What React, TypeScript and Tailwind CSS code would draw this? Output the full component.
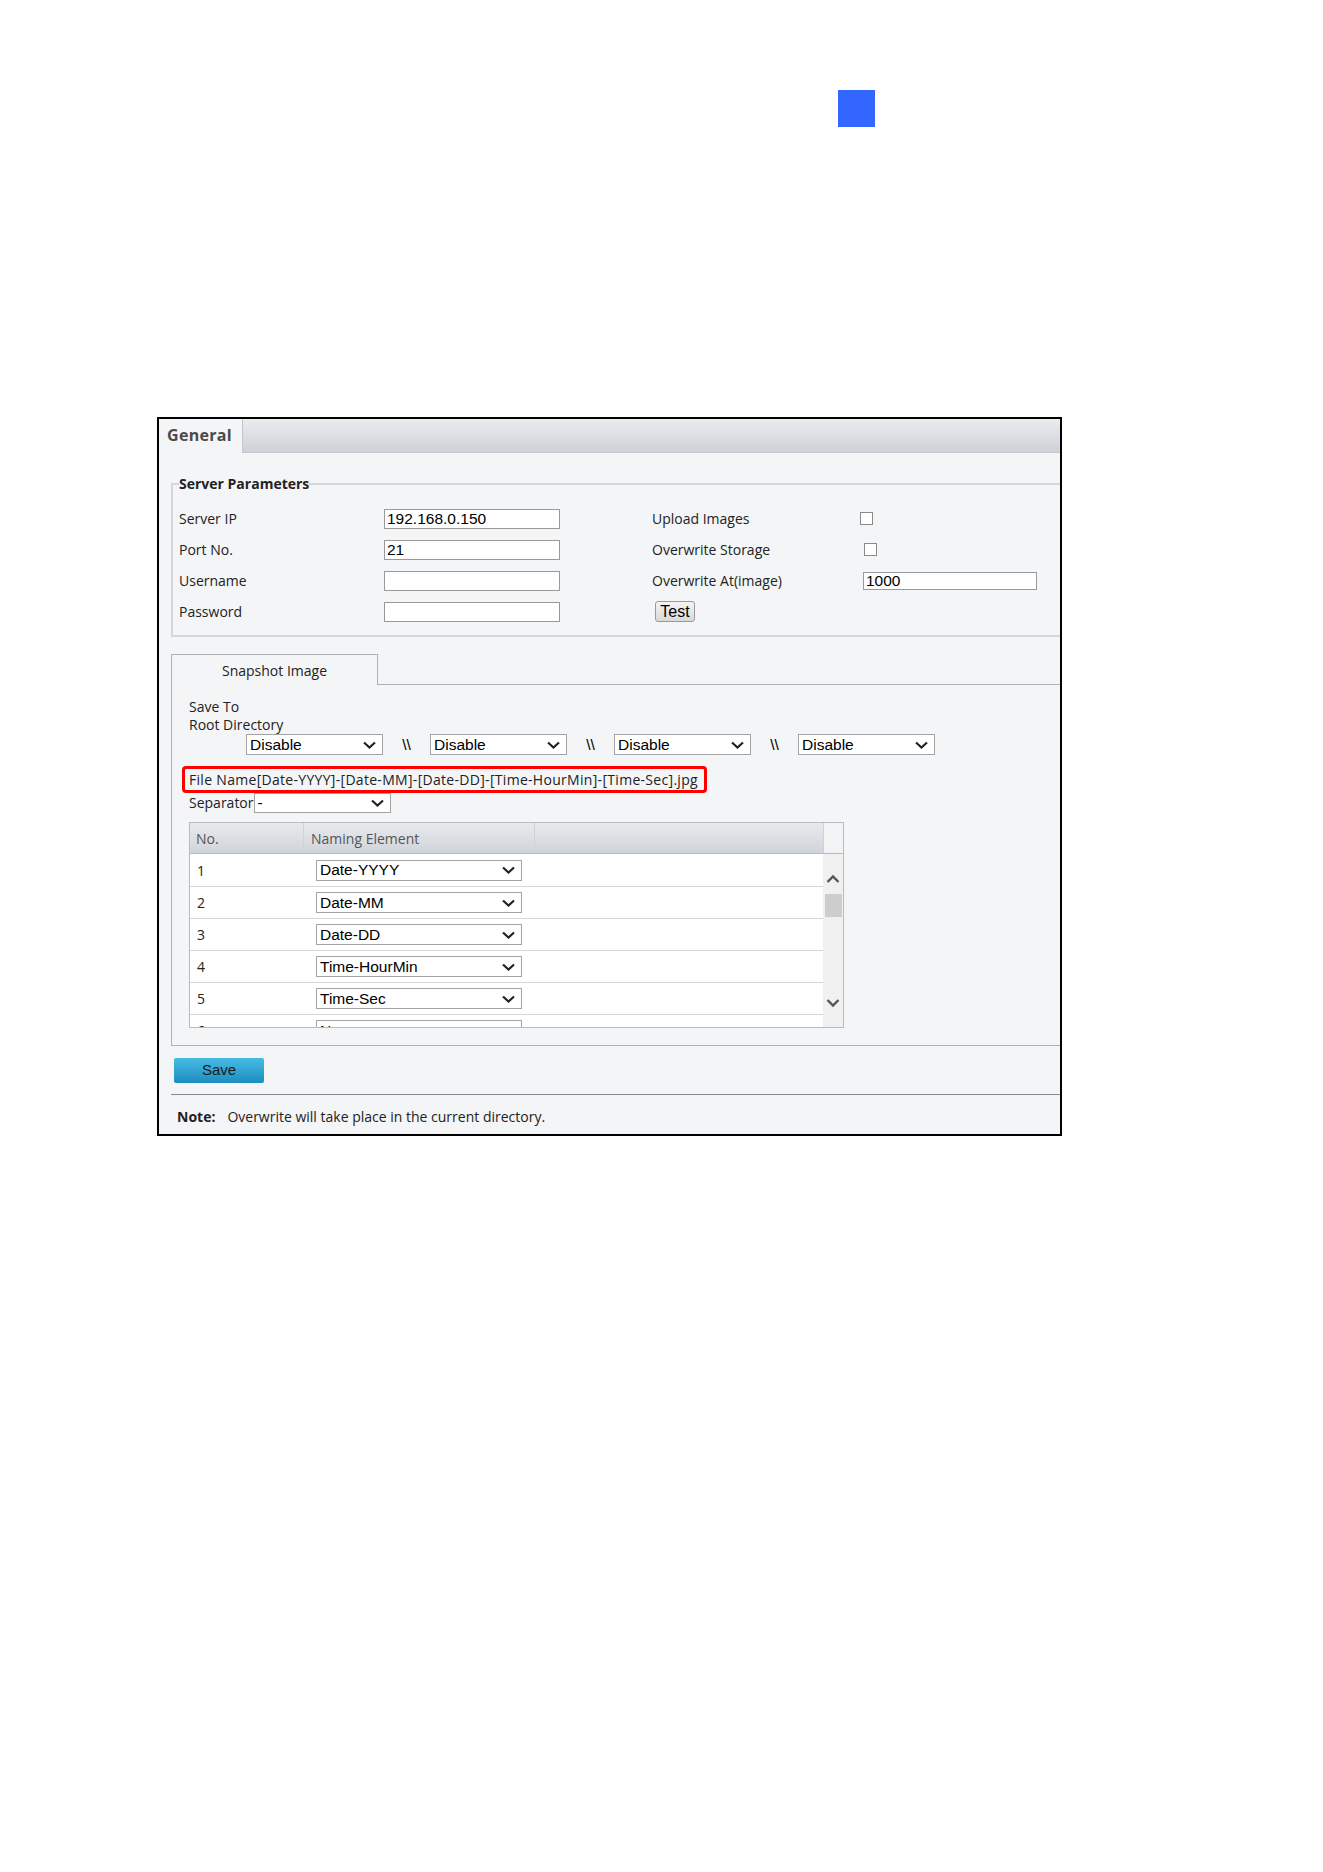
import React from "react";

const LABEL = "font-['Open_Sans','Noto_Sans',sans-serif] text-[14px] text-[#222]";
const FIELD = "font-['Liberation_Sans',Arial,sans-serif] text-[15.5px] text-black";

function Chevron({ up = false, color = "#222" }: { up?: boolean; color?: string }) {
  return (
    <svg width="13" height="8" viewBox="0 0 13 8" className="shrink-0">
      <path
        d={up ? "M1 6.5 L6.5 1.5 L12 6.5" : "M1 1.5 L6.5 6.5 L12 1.5"}
        stroke={color}
        strokeWidth="2.2"
        fill="none"
      />
    </svg>
  );
}

function Select({ value, className = "" }: { value: string; className?: string }) {
  return (
    <div
      className={`flex items-center justify-between overflow-hidden bg-white border border-[#a3a3a3] pl-[3px] pr-[6px] ${className}`}
    >
      <span className={`${FIELD} leading-none`}>{value}</span>
      <Chevron />
    </div>
  );
}

function TextBox({ value = "", className = "" }: { value?: string; className?: string }) {
  return (
    <div
      className={`flex items-center bg-white border border-[#9a9a9a] pl-[2px] ${FIELD} leading-none ${className}`}
    >
      {value}
    </div>
  );
}

function CheckBox({ className = "" }: { className?: string }) {
  return <div className={`h-[13px] w-[13px] bg-white border border-[#8a8a8a] ${className}`} />;
}

function PathSep() {
  return <span className={`${FIELD} w-[47px] text-center leading-none text-[#333]`}>\\</span>;
}

const naming = ["Date-YYYY", "Date-MM", "Date-DD", "Time-HourMin", "Time-Sec", "None"];

export default function App() {
  return (
    <div className="min-h-[1872px] w-[1323px] bg-white pt-[90px]">
      <div className="ml-[838px] h-[37px] w-[37px] bg-[#3366ff]" />

      <div className="ml-[157px] mt-[290px] flex h-[719px] w-[905px] flex-col border-2 border-black bg-[#f4f5f7]">
        {/* tab strip */}
        <div className="flex h-[34px] shrink-0">
          <div className="flex w-[84px] items-center border-r border-[#c3c7cc] bg-[#f4f5f7] pb-[2px] pl-[8px] font-['Open_Sans','Noto_Sans',sans-serif] text-[16px] font-bold tracking-[0.3px] text-[#4a4a4a]">
            General
          </div>
          <div className="flex-1 border-b border-[#c3c7cc] bg-gradient-to-b from-[#eaecef] to-[#cdd2d8]" />
        </div>

        <div className="flex flex-1 flex-col pl-[12px]">
          {/* server parameters */}
          <fieldset className="mt-[22px] border-2 border-r-0 border-[#d3d6da] pl-[6px] pt-[10px] pb-[8px]">
            <legend className={`${LABEL} text-[13.5px] font-bold leading-[18px] text-[#1a1a1a]`}>Server Parameters</legend>

            <div className="flex h-[31px] items-center">
              <span className={`${LABEL} w-[205px]`}>Server IP</span>
              <TextBox value="192.168.0.150" className="h-[20px] w-[176px]" />
              <span className={`${LABEL} ml-[92px] w-[208px]`}>Upload Images</span>
              <CheckBox />
            </div>
            <div className="flex h-[31px] items-center">
              <span className={`${LABEL} w-[205px]`}>Port No.</span>
              <TextBox value="21" className="h-[20px] w-[176px]" />
              <span className={`${LABEL} ml-[92px] w-[208px]`}>Overwrite Storage</span>
              <CheckBox className="ml-[4px]" />
            </div>
            <div className="flex h-[31px] items-center">
              <span className={`${LABEL} w-[205px]`}>Username</span>
              <TextBox className="h-[20px] w-[176px]" />
              <span className={`${LABEL} ml-[92px] w-[208px]`}>Overwrite At(image)</span>
              <TextBox value="1000" className="ml-[3px] h-[18px] w-[174px]" />
            </div>
            <div className="flex h-[31px] items-center">
              <span className={`${LABEL} w-[205px]`}>Password</span>
              <TextBox className="h-[20px] w-[176px]" />
              <button className="ml-[95px] flex h-[21px] w-[40px] items-center justify-center rounded-[3px] border border-[#9a9a9a] bg-gradient-to-b from-[#f4f4f4] to-[#d9d9d9] font-['Liberation_Sans',Arial,sans-serif] text-[16px] leading-none text-black">
                Test
              </button>
            </div>
          </fieldset>

          {/* snapshot settings */}
          <div className="mt-[17px] flex flex-col border-b border-l border-[#aeb2b7] pb-[17px]">
            <div className="flex h-[31px]">
              <div className={`${LABEL} flex w-[206px] items-center justify-center border-r border-t border-[#aeb2b7]`}>
                Snapshot Image
              </div>
              <div className="flex-1 border-b border-[#aeb2b7]" />
            </div>

            <div className="pl-[17px] pt-[13px]">
              <div className={`${LABEL} leading-[18px]`}>Save To</div>
              <div className={`${LABEL} leading-[18px]`}>Root Directory</div>

              <div className="ml-[57px] flex h-[21px] items-center">
                <Select value="Disable" className="h-[21px] w-[137px]" />
                <PathSep />
                <Select value="Disable" className="h-[21px] w-[137px]" />
                <PathSep />
                <Select value="Disable" className="h-[21px] w-[137px]" />
                <PathSep />
                <Select value="Disable" className="h-[21px] w-[137px]" />
              </div>

              <div className="ml-[-7px] mt-[11px] flex h-[27px] w-[525px] items-center rounded-[4px] border-[3px] border-[#ff0000] pl-[4px]">
                <span className={`${LABEL} text-[14.6px] leading-none tracking-[0.3px] text-[#1a1a1a]`}>
                  File Name[Date-YYYY]-[Date-MM]-[Date-DD]-[Time-HourMin]-[Time-Sec].jpg
                </span>
              </div>

              <div className="flex h-[20px] items-center">
                <span className={`${LABEL} leading-none`}>Separator</span>
                <Select value="-" className="h-[20px] w-[137px]" />
              </div>

              {/* naming elements table */}
              <div className="mt-[9px] w-[655px] border border-[#b7babe]">
                <div className="flex h-[31px] border-b border-[#b7babe]">
                  <div className="flex flex-1 bg-gradient-to-b from-[#e8eaed] to-[#d0d4da]">
                    <div className={`${LABEL} flex w-[114px] items-center border-r border-[#cfd2d6] pl-[6px] text-[#555]`}>No.</div>
                    <div className={`${LABEL} flex w-[231px] items-center border-r border-[#cfd2d6] pl-[7px] text-[#555]`}>Naming Element</div>
                    <div className="flex-1" />
                  </div>
                  <div className="w-[20px] border-l border-[#cfd2d6] bg-[#f2f3f5]" />
                </div>

                <div className="flex h-[173px]">
                  <div className="flex-1 overflow-hidden bg-white">
                    {naming.map((n, i) => (
                      <div
                        key={n}
                        className={`flex items-center border-b border-[#d6d6d6] ${i === 0 ? "h-[33px]" : "h-[32px]"}`}
                      >
                        <span className={`${LABEL} w-[114px] pl-[7px]`}>{i + 1}</span>
                        <Select value={n} className="ml-[12px] h-[21px] w-[206px]" />
                      </div>
                    ))}
                  </div>
                  <div className="flex w-[20px] flex-col items-center bg-[#f0f0f0] pt-[20px] pb-[19px]">
                    <svg width="14" height="10" viewBox="0 0 14 10">
                      <path d="M1.5 8 L7 2.5 L12.5 8" stroke="#555" strokeWidth="2.4" fill="none" />
                    </svg>
                    <div className="mt-[10px] h-[23px] w-[17px] bg-[#cdcdcd]" />
                    <div className="flex-1" />
                    <svg width="14" height="10" viewBox="0 0 14 10">
                      <path d="M1.5 2 L7 7.5 L12.5 2" stroke="#555" strokeWidth="2.4" fill="none" />
                    </svg>
                  </div>
                </div>
              </div>
            </div>
          </div>

          <button className="ml-[3px] mt-[12px] flex h-[25px] w-[90px] items-center justify-center rounded-[2px] bg-gradient-to-b from-[#47bbe4] to-[#1a8dc2] font-['Liberation_Sans',Arial,sans-serif] text-[15px] text-[#1a1a1a]">
            Save
          </button>

          <div className="mt-[11px] border-t border-[#8c8c8c]" />

          <div className="ml-[6px] mt-[13px] flex leading-[18px]">
            <span className={`${LABEL} font-bold text-[#111]`}>Note:</span>
            <span className={`${LABEL} ml-[12px] text-[#222]`}>Overwrite will take place in the current directory.</span>
          </div>
        </div>
      </div>
    </div>
  );
}
